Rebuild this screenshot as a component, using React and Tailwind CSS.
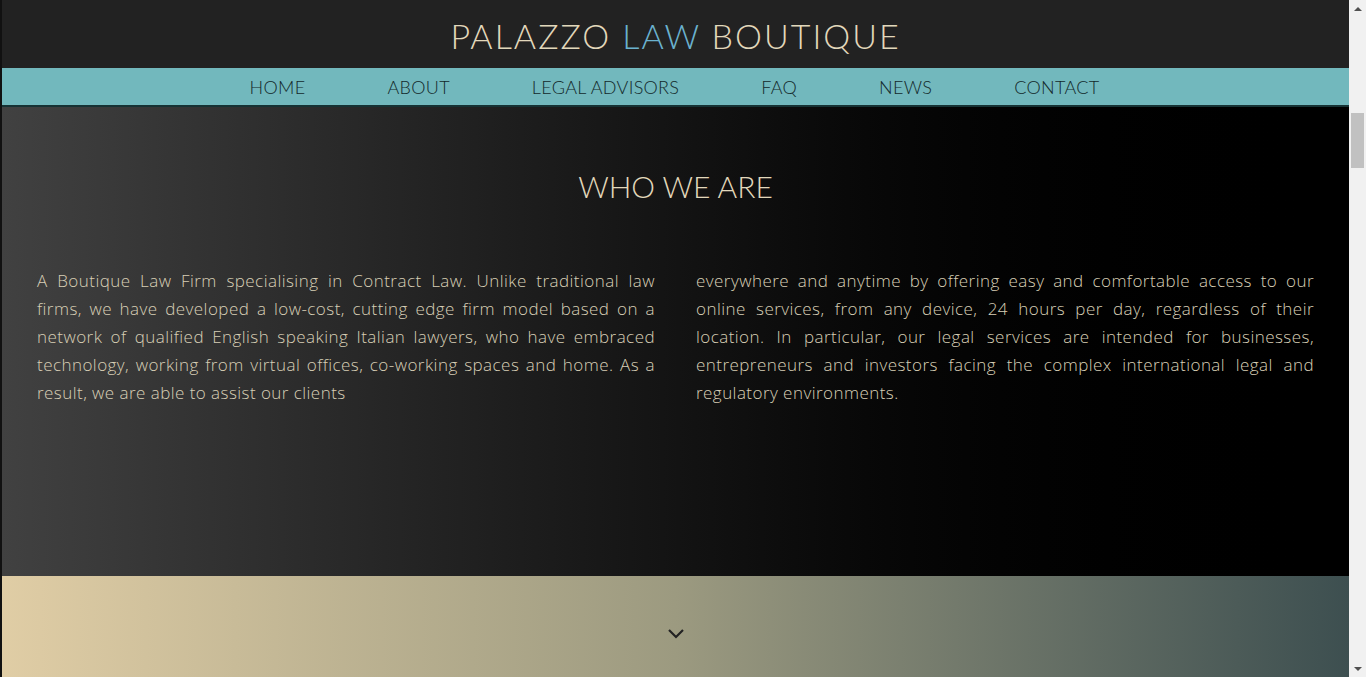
import React from 'react';

const navItems = ['HOME', 'ABOUT', 'LEGAL ADVISORS', 'FAQ', 'NEWS', 'CONTACT'];

const Scrollbar = () => (
  <div className="w-[17px] h-full bg-[#f1f1f1] flex flex-col items-center">
    <div className="h-[17px] flex items-center justify-center">
      <div className="w-0 h-0 border-l-[4px] border-r-[4px] border-b-[4px] border-l-transparent border-r-transparent border-b-[#505050]" />
    </div>
    <div className="mt-[96px] w-[13px] h-[55px] bg-[#c1c1c1]" />
    <div className="flex-1" />
    <div className="h-[17px] flex items-center justify-center">
      <div className="w-0 h-0 border-l-[4px] border-r-[4px] border-t-[4px] border-l-transparent border-r-transparent border-t-[#505050]" />
    </div>
  </div>
);

const App = () => {
  return (
    <div className="flex h-[677px] w-full overflow-hidden bg-black">
      <div className="w-[2px] h-full bg-[#111]" />
      <div className="flex-1 flex flex-col h-full">
        <header className="h-[68px] bg-[#222222] flex items-center justify-center">
          <h1 className="font-['Lato',sans-serif] font-light text-[34px] tracking-[2px] text-[#e2d8bb] leading-none mt-[4px]">
            PALAZZO <span className="text-[#6bb2cf]">LAW</span> BOUTIQUE
          </h1>
        </header>

        <nav className="h-[39px] bg-[#72b8bd] border-b-2 border-[#163234] flex items-center justify-center gap-[82px] pr-[2px]">
          {navItems.map((item) => (
            <a
              key={item}
              href="#"
              className="font-['Lato',sans-serif] font-light text-[18px] tracking-[0.3px] text-[#12292b] leading-none"
            >
              {item}
            </a>
          ))}
        </nav>

        <section className="h-[469px] bg-gradient-to-r from-[#414141] to-[#000000] flex flex-col items-center">
          <h2 className="mt-[64px] font-['Lato',sans-serif] font-light text-[30px] tracking-[0px] text-[#e2d8bb] leading-none">
            WHO WE ARE
          </h2>
          <div className="mt-[66px] w-full px-[35px] grid grid-cols-2 gap-[41px] font-['Open_Sans',sans-serif] font-light text-[17px] leading-[28px] tracking-[0.45px] text-[#d8cfb6]">
            <p className="text-justify">
              A Boutique Law Firm specialising in Contract Law. Unlike traditional law firms, we have developed a low-cost, cutting edge firm model based on a network of qualified English speaking Italian lawyers, who have embraced technology, working from virtual offices, co-working spaces and home. As a result, we are able to assist our clients
            </p>
            <p className="text-justify">
              everywhere and anytime by offering easy and comfortable access to our online services, from any device, 24 hours per day, regardless of their location. In particular, our legal services are intended for businesses, entrepreneurs and investors facing the complex international legal and regulatory environments.
            </p>
          </div>
        </section>

        <section className="flex-1 bg-gradient-to-r from-[#e0cda5] via-[#9c9a80] to-[#3d4f50] flex justify-center">
          <svg className="mt-[50px]" width="20" height="14" viewBox="0 0 20 14" fill="none">
            <path d="M3 4 L10 11 L17 4" stroke="#222" strokeWidth="2.2" />
          </svg>
        </section>
      </div>
      <Scrollbar />
    </div>
  );
};

export default App;
